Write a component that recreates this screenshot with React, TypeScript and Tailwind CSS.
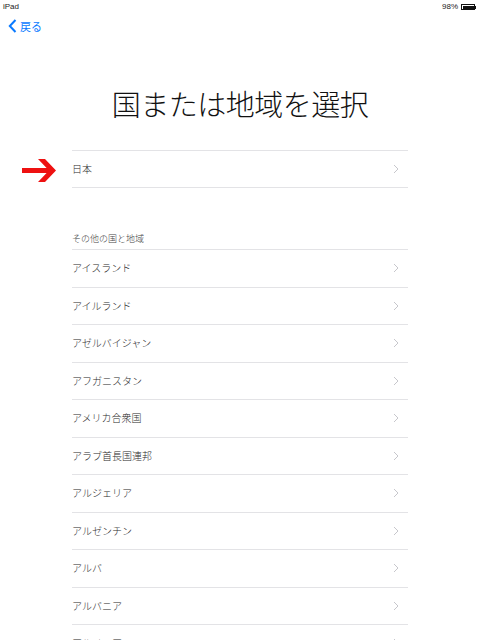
import React from "react";

const font = { fontFamily: '"Noto Sans CJK JP", "Noto Sans", sans-serif' };

const countries = [
  "アイスランド",
  "アイルランド",
  "アゼルバイジャン",
  "アフガニスタン",
  "アメリカ合衆国",
  "アラブ首長国連邦",
  "アルジェリア",
  "アルゼンチン",
  "アルバ",
  "アルバニア",
  "アルメニア",
];

function Chevron() {
  return (
    <svg width="6" height="10" viewBox="0 0 6 10" className="shrink-0">
      <path d="M1 1 L5 5 L1 9" fill="none" stroke="#c7c7cc" strokeWidth="1" />
    </svg>
  );
}

function Row({ label, top }: { label: string; top?: boolean }) {
  return (
    <div
      className={`h-[37.5px] flex items-center justify-between pr-[9px] border-b border-[#e3e3e6] ${top ? "border-t" : ""}`}
    >
      <span className="text-[10px] leading-[12px] font-light text-[#2a2a2a]">{label}</span>
      <Chevron />
    </div>
  );
}

export default function App() {
  return (
    <div className="relative w-[480px] h-[640px] overflow-hidden bg-white" style={font}>
      <div className="h-[14px] flex items-center justify-between pl-[3px] pr-[4px] text-[8px] text-[#222]">
        <span className="leading-[10px]" style={{ fontFamily: '"Liberation Sans", sans-serif' }}>iPad</span>
        <div className="flex items-center gap-[3px]">
          <span className="leading-[10px]" style={{ fontFamily: '"Liberation Sans", sans-serif' }}>98%</span>
          <div className="flex items-center">
            <div className="w-[14px] h-[6px] border border-[#111] p-[0.5px]">
              <div className="w-full h-full bg-[#111]" />
            </div>
            <div className="w-[1px] h-[3px] bg-[#111]" />
          </div>
        </div>
      </div>
      <div className="h-[24px] flex items-center pl-[8px] gap-[3px] text-[#0a7aff]">
        <svg width="9" height="14" viewBox="0 0 9 14">
          <path d="M7.5 1 L1.8 7 L7.5 13" fill="none" stroke="#0a7aff" strokeWidth="2" />
        </svg>
        <span className="text-[11px] leading-[14px]">戻る</span>
      </div>
      <div className="mt-[50px] h-[30px] flex items-center justify-center">
        <h1 className="text-[29px] leading-[30px] font-extralight text-[#111] tracking-[-0.5px]">国または地域を選択</h1>
      </div>
      <div className="w-[336px] mx-auto mt-[32px]">
        <Row label="日本" top />
        <div className="h-[61.5px] flex items-end pb-[4px]">
          <span className="text-[9px] leading-[12px] font-light text-[#444]">その他の国と地域</span>
        </div>
        <div className="border-t border-[#e3e3e6]">
          {countries.map((c) => (
            <Row key={c} label={c} />
          ))}
        </div>
      </div>
      <svg className="absolute left-[22px] top-[159px]" width="35" height="23" viewBox="0 0 35 23">
        <path d="M0 9 L27 9 L27 14 L0 14 Z" fill="#ee1111" />
        <path d="M16 0 L23 0 L34 11.5 L23 23 L16 23 L27 11.5 Z" fill="#ee1111" />
      </svg>
    </div>
  );
}
